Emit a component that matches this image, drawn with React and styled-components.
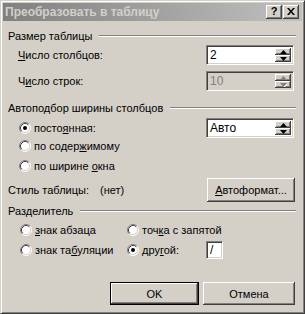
import React from 'react';
import styled, { createGlobalStyle } from 'styled-components';

const Global = createGlobalStyle`
  html, body { margin: 0; padding: 0; background: #d4d0c8; }
  body { font-family: "Liberation Sans", Arial, sans-serif; font-size: 11px; color: #000; }
  * { box-sizing: border-box; }
`;

const Window = styled.div`
  width: 305px;
  height: 314px;
  background: #d4d0c8;
  border: 1px solid;
  border-color: #d4d0c8 #404040 #404040 #d4d0c8;
  box-shadow: inset 1px 1px 0 #fff, inset -1px -1px 0 #808080;
  padding: 2px;
  display: flex;
  flex-direction: column;
`;

const TitleBar = styled.div`
  height: 18px;
  flex: none;
  background: linear-gradient(to right, #808080, #c0c0c0);
  display: flex;
  align-items: center;
  padding: 0 3px 0 2px;
`;

const TitleText = styled.div`
  flex: 1;
  font-weight: bold;
  font-size: 12px;
  color: #d4d0c8;
  white-space: nowrap;
`;

const TitleButton = styled.div`
  width: 16px;
  height: 14px;
  background: #d4d0c8;
  box-shadow: inset -1px -1px 0 #404040, inset 1px 1px 0 #fff, inset -2px -2px 0 #808080;
  display: flex;
  align-items: center;
  justify-content: center;
  font-weight: bold;
  font-size: 11px;
  line-height: 1;
  padding-bottom: 1px;
  margin-left: ${p => p.$gap || 0}px;
`;

const Content = styled.div`
  display: flex;
  flex-direction: column;
  padding: 0 6px 0 5px;
`;

const Heading = styled.div`
  height: 14px;
  margin-top: ${p => p.$mt}px;
  display: flex;
  align-items: center;
  gap: 7px;
  white-space: nowrap;
`;

const Rule = styled.div`
  flex: 1;
  height: 2px;
  border-top: 1px solid #808080;
  border-bottom: 1px solid #fff;
`;

const Row = styled.div`
  height: ${p => p.$h}px;
  margin-top: ${p => p.$mt}px;
  padding-left: ${p => p.$pl || 0}px;
  padding-right: ${p => p.$pr || 0}px;
  display: flex;
  align-items: center;
  white-space: nowrap;
`;

const Grow = styled.div`
  flex: 1;
  display: flex;
  align-items: center;
`;

const FixedLabel = styled.div`
  width: ${p => p.$w}px;
  flex: none;
`;

const U = styled.span`
  text-decoration: underline;
  text-underline-offset: 1px;
`;

const Sunken = styled.div`
  width: ${p => p.$w}px;
  height: ${p => p.$h}px;
  border: 1px solid;
  border-color: #808080 #fff #fff #808080;
  box-shadow: inset 1px 1px 0 #404040, inset -1px -1px 0 #d4d0c8;
  background: ${p => (p.$disabled ? '#d4d0c8' : '#fff')};
  padding: 2px;
  display: flex;
  flex: none;
`;

const FieldText = styled.div`
  flex: 1;
  display: flex;
  align-items: center;
  padding-left: 1px;
  color: ${p => (p.$disabled ? '#808080' : '#000')};
  font-size: 12px;
`;

const SpinCol = styled.div`
  width: 16px;
  display: flex;
  flex-direction: column;
`;

const SpinHalf = styled.div`
  flex: 1;
  background: #d4d0c8;
  box-shadow: inset -1px -1px 0 #404040, inset 1px 1px 0 #fff, inset -2px -2px 0 #808080;
  display: flex;
  align-items: center;
  justify-content: center;
`;

const Arrow = ({ up, disabled }) => (
  <svg width="7" height="4" viewBox="0 0 7 4" style={{ display: 'block' }}>
    {disabled && (
      <polygon
        points={up ? '4,1 1,4 7,4' : '1,1 7,1 4,4'}
        fill="#fff"
        transform="translate(0.5,0.5)"
      />
    )}
    <polygon points={up ? '3.5,0 0,4 7,4' : '0,0 7,0 3.5,4'} fill={disabled ? '#808080' : '#000'} />
  </svg>
);

const Spin = ({ value, disabled }) => (
  <Sunken $w={88} $h={20} $disabled={disabled}>
    <FieldText $disabled={disabled}>{value}</FieldText>
    <SpinCol>
      <SpinHalf><Arrow up disabled={disabled} /></SpinHalf>
      <SpinHalf><Arrow disabled={disabled} /></SpinHalf>
    </SpinCol>
  </Sunken>
);

const RadioWrap = styled.div`
  display: flex;
  align-items: center;
  gap: 3px;
  width: ${p => (p.$w ? `${p.$w}px` : 'auto')};
  flex: none;
`;

const Radio = ({ checked, children, w }) => (
  <RadioWrap $w={w}>
    <svg width="12" height="12" viewBox="0 0 12 12" style={{ display: 'block', flex: 'none' }}>
      <circle cx="6" cy="6" r="5" fill="#fff" />
      <path d="M2.11 9.89 A5.5 5.5 0 0 1 9.89 2.11" fill="none" stroke="#808080" strokeWidth="1" />
      <path d="M9.89 2.11 A5.5 5.5 0 0 1 2.11 9.89" fill="none" stroke="#fff" strokeWidth="1" />
      <path d="M2.82 9.18 A4.5 4.5 0 0 1 9.18 2.82" fill="none" stroke="#404040" strokeWidth="1" />
      <path d="M9.18 2.82 A4.5 4.5 0 0 1 2.82 9.18" fill="none" stroke="#d4d0c8" strokeWidth="1" />
      {checked && <circle cx="6" cy="6" r="2" fill="#000" />}
    </svg>
    <span>{children}</span>
  </RadioWrap>
);

const Button = styled.div`
  width: ${p => p.$w}px;
  height: ${p => p.$h}px;
  flex: none;
  background: #d4d0c8;
  border: ${p => (p.$default ? '1px solid #000' : 'none')};
  box-shadow: inset -1px -1px 0 #404040, inset 1px 1px 0 #fff, inset -2px -2px 0 #808080;
  display: flex;
  align-items: center;
  justify-content: center;
  font-size: 11px;
`;

const ButtonRow = styled.div`
  margin-top: ${p => p.$mt}px;
  display: flex;
  justify-content: flex-end;
  gap: 4px;
  padding-right: 1px;
`;

const CloseGlyph = () => (
  <svg width="8" height="7" viewBox="0 0 8 7" style={{ display: 'block' }}>
    <path d="M0 0 L2 0 L4 2.5 L6 0 L8 0 L5 3.5 L8 7 L6 7 L4 4.5 L2 7 L0 7 L3 3.5 Z" fill="#000" />
  </svg>
);

export default function App() {
  return (
    <>
      <Global />
      <Window>
        <TitleBar>
          <TitleText>Преобразовать в таблицу</TitleText>
          <TitleButton>?</TitleButton>
          <TitleButton $gap={1}><CloseGlyph /></TitleButton>
        </TitleBar>
        <Content>
          <Heading $mt={8}>Размер таблицы<Rule /></Heading>
          <Row $h={20} $mt={2} $pl={10} $pr={2}>
            <Grow><U>Ч</U>исло столбцов:</Grow>
            <Spin value="2" />
          </Row>
          <Row $h={20} $mt={6} $pl={10} $pr={2}>
            <Grow>Ч<U>и</U>сло строк:</Grow>
            <Spin value="10" disabled />
          </Row>

          <Heading $mt={10}>Автоподбор ширины столбцов<Rule /></Heading>
          <Row $h={20} $mt={3} $pl={11} $pr={2}>
            <Grow><Radio checked>посто<U>я</U>нная:</Radio></Grow>
            <Spin value="Авто" />
          </Row>
          <Row $h={14} $mt={1} $pl={11}>
            <Radio>по содер<U>ж</U>имому</Radio>
          </Row>
          <Row $h={14} $mt={6} $pl={11}>
            <Radio>по ширине <U>о</U>кна</Radio>
          </Row>

          <Row $h={24} $mt={5} $pr={1}>
            <FixedLabel $w={92}>Стиль таблицы:</FixedLabel>
            <Grow>(нет)</Grow>
            <Button $w={88} $h={24}><span><U>А</U>втоформат...</span></Button>
          </Row>

          <Heading $mt={2}>Разделитель<Rule /></Heading>
          <Row $h={14} $mt={5} $pl={12}>
            <Radio w={107}><U>з</U>нак абзаца</Radio>
            <Radio>точ<U>к</U>а с запятой</Radio>
          </Row>
          <Row $h={20} $mt={3} $pl={12}>
            <Radio w={107}>знак та<U>б</U>уляции</Radio>
            <Radio w={79} checked>дру<U>г</U>ой:</Radio>
            <Sunken $w={17} $h={18}>
              <FieldText>/</FieldText>
            </Sunken>
          </Row>

          <ButtonRow $mt={22}>
            <Button $w={89} $h={23} $default>OK</Button>
            <Button $w={92} $h={23}>Отмена</Button>
          </ButtonRow>
        </Content>
      </Window>
    </>
  );
}
